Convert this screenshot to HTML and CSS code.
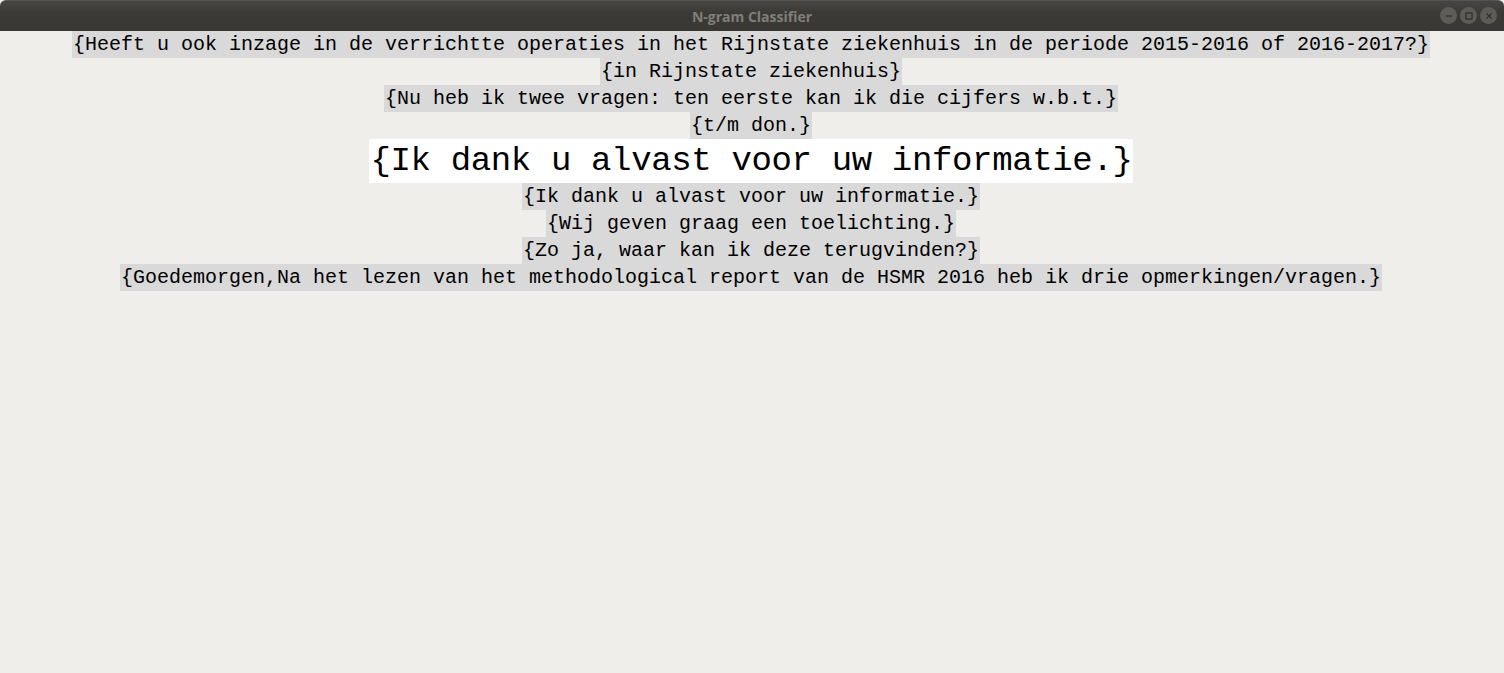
FILE: index.html
```html
<!DOCTYPE html>
<html>
<head>
<meta charset="utf-8">
<link rel="stylesheet" href="styles.css">
</head>
<body>
<div class="titlebar">
  <span class="title">N-gram Classifier</span>
  <div class="buttons">
    <span class="btn"><svg width="16" height="16" viewBox="0 0 16 16"><line x1="4.5" y1="8" x2="11.5" y2="8" stroke="#2e2d2a" stroke-width="1.4"/></svg></span>
    <span class="btn"><svg width="16" height="16" viewBox="0 0 16 16"><rect x="4.5" y="4.5" width="7" height="7" fill="none" stroke="#2e2d2a" stroke-width="1.4"/></svg></span>
    <span class="btn"><svg width="16" height="16" viewBox="0 0 16 16"><path d="M5 5 L11 11 M11 5 L5 11" stroke="#2e2d2a" stroke-width="1.4"/></svg></span>
  </div>
</div>
<div class="content">
  <div class="label">{Heeft u ook inzage in de verrichtte operaties in het Rijnstate ziekenhuis in de periode 2015-2016 of 2016-2017?}</div>
  <div class="label">{in Rijnstate ziekenhuis}</div>
  <div class="label">{Nu heb ik twee vragen: ten eerste kan ik die cijfers w.b.t.}</div>
  <div class="label">{t/m don.}</div>
  <div class="label big">{Ik dank u alvast voor uw informatie.}</div>
  <div class="label">{Ik dank u alvast voor uw informatie.}</div>
  <div class="label">{Wij geven graag een toelichting.}</div>
  <div class="label">{Zo ja, waar kan ik deze terugvinden?}</div>
  <div class="label">{Goedemorgen,Na het lezen van het methodological report van de HSMR 2016 heb ik drie opmerkingen/vragen.}</div>
</div>
</body>
</html>
```
FILE: styles.css
```css
html, body {
  margin: 0;
  padding: 0;
  background: #efeeea;
  height: 100%;
  overflow: hidden;
}
.titlebar {
  height: 31px;
  background: linear-gradient(#464541, #3b3a36 40%, #393834);
  border-top: 1px solid #55544f;
  box-sizing: border-box;
  display: flex;
  align-items: center;
  justify-content: center;
  position: relative;
  border-radius: 6px 6px 0 0;
}
.title {
  font-family: "Open Sans", "DejaVu Sans", sans-serif;
  font-weight: 700;
  font-size: 14px;
  color: #807f79;
}
.buttons {
  position: absolute;
  right: 7px;
  top: 6px;
  display: flex;
  gap: 3px;
}
.btn {
  width: 17px;
  height: 17px;
  border-radius: 50%;
  background: #5d5c57;
  display: flex;
  align-items: center;
  justify-content: center;
}
.btn svg { width: 14px; height: 14px; }
.content {
  display: flex;
  flex-direction: column;
  align-items: center;
  padding-right: 2px;
}
.label {
  font-family: "Liberation Mono", monospace;
  font-size: 20px;
  line-height: 27px;
  height: 27px;
  background: #d9d9d9;
  color: #000;
  padding: 0 1px;
  white-space: pre;
}
.label.big {
  font-size: 34px;
  line-height: 44px;
  height: 44px;
  background: #ffffff;
  letter-spacing: -0.35px;
  padding: 0 0 0 1px;
}
```
